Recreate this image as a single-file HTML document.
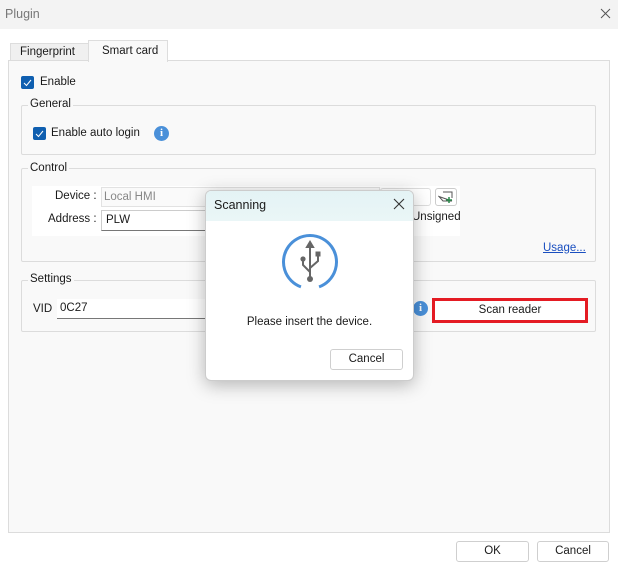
<!DOCTYPE html>
<html><head><meta charset="utf-8"><style>
*{box-sizing:border-box;margin:0;padding:0}
body{width:618px;height:572px;position:relative;background:#fff;font-family:"Liberation Sans",sans-serif;font-size:11.5px;color:#1a1a1a;overflow:hidden}
.a{position:absolute}
.title{left:0;top:0;width:618px;height:29px;background:#f3f3f3}
.gb{border:1px solid #dcdcdc;border-radius:2px}
.lbl{background:#f9f9f9;padding:0 2px}
.cb{width:13px;height:13px;background:#0f5fb0;border-radius:2px}
.cb svg{position:absolute;left:2px;top:2px}
.info{width:15px;height:15px;border-radius:50%;background:#4a90d9;color:#fff;font-weight:bold;font-size:11px;text-align:center;line-height:15px;font-family:"Liberation Serif",serif}
.btn{background:#fff;border:1px solid #cfcfcf;border-radius:3px;text-align:center;line-height:18px}
</style></head><body>
<div class="a title"></div>
<div class="a" style="left:5px;top:7px;color:#777;font-size:12.5px">Plugin</div>
<svg class="a" style="left:600px;top:8px" width="11" height="11"><path d="M1 1L10 10M10 1L1 10" stroke="#555" stroke-width="1"/></svg>

<div class="a" style="left:10px;top:43px;width:79px;height:18px;background:#f0f0f0;border:1px solid #ddd;border-bottom:none"></div>
<div class="a" style="left:20px;top:46px">Fingerprint</div>
<div class="a" style="left:8px;top:60px;width:602px;height:473px;background:#f9f9f9;border:1px solid #dcdcdc"></div>
<div class="a" style="left:88px;top:40px;width:80px;height:22px;background:#f9f9f9;border:1px solid #ddd;border-bottom:none"></div>
<div class="a" style="left:102px;top:45px">Smart card</div>

<div class="a cb" style="left:21px;top:76px"><svg width="9" height="9"><path d="M1 5L3.5 7.5L8 2" stroke="#fff" fill="none"/></svg></div>
<div class="a" style="left:40px;top:76px">Enable</div>

<div class="a gb" style="left:21px;top:105px;width:575px;height:50px"></div>
<div class="a lbl" style="left:28px;top:98px">General</div>
<div class="a cb" style="left:33px;top:127px"><svg width="9" height="9"><path d="M1 5L3.5 7.5L8 2" stroke="#fff" fill="none"/></svg></div>
<div class="a" style="left:51px;top:127px">Enable auto login</div>
<div class="a info" style="left:154px;top:126px">i</div>

<div class="a gb" style="left:21px;top:168px;width:575px;height:94px"></div>
<div class="a lbl" style="left:28px;top:162px">Control</div>
<div class="a" style="left:32px;top:186px;width:428px;height:50px;background:#fff"></div>
<div class="a" style="left:55px;top:190px">Device :</div>
<div class="a" style="left:101px;top:187px;width:279px;height:20px;border:1px solid #e2e2e2;background:#fafafa;color:#888;padding:3px 2px">Local HMI</div>
<div class="a" style="left:48px;top:213px">Address :</div>
<div class="a" style="left:101px;top:210px;width:279px;height:21px;border:1px solid #ccc;border-bottom:1px solid #777;padding:3px 4px">PLW</div>
<div class="a" style="left:380px;top:188px;width:51px;height:18px;border:1px solid #ddd;border-radius:3px;background:#fff"></div>
<div class="a" style="left:435px;top:188px;width:22px;height:18px;border:1px solid #ccc;border-radius:3px;background:#fff"></div>
<svg class="a" style="left:438px;top:190px" width="17" height="14"><path d="M5 2H14V8M14 11H5L1 6.5Z" stroke="#555" fill="none"/><path d="M11 7V13M8 10H14" stroke="#2a8a4a" stroke-width="1.5"/></svg>
<div class="a" style="left:412px;top:211px">Unsigned</div>
<div class="a" style="left:543px;top:242px;color:#1a4fc0;text-decoration:underline">Usage...</div>

<div class="a gb" style="left:21px;top:280px;width:575px;height:52px"></div>
<div class="a lbl" style="left:28px;top:273px">Settings</div>
<div class="a" style="left:33px;top:303px">VID</div>
<div class="a" style="left:57px;top:299px;width:160px;height:20px;background:#fff;border-bottom:1px solid #777;padding:3px 3px">0C27</div>
<div class="a info" style="left:413px;top:301px">i</div>
<div class="a" style="left:432px;top:298px;width:156px;height:25px;border:3px solid #e41b23;background:#fff;text-align:center;line-height:19px">Scan reader</div>

<div class="a btn" style="left:456px;top:541px;width:73px;height:21px">OK</div>
<div class="a btn" style="left:537px;top:541px;width:72px;height:21px">Cancel</div>

<div class="a" style="left:205px;top:190px;width:209px;height:191px;background:#fff;border:1px solid #ccc;border-radius:6px;box-shadow:0 4px 18px rgba(0,0,0,0.28);overflow:hidden">
<div style="height:30px;background:linear-gradient(#e4f3f5,#eaf6f7)"></div>
</div>
<div class="a" style="left:214px;top:198px;font-size:12.5px">Scanning</div>
<svg class="a" style="left:393px;top:198px" width="12" height="12"><path d="M1 1L11 11M11 1L1 11" stroke="#333" stroke-width="1.1"/></svg>
<svg class="a" style="left:280px;top:232px" width="60" height="60">
<path d="M39.06 54.9A26.5 26.5 0 1 0 20.94 54.9" fill="none" stroke="#4a90d9" stroke-width="3"/>
<g stroke="#666" stroke-width="2" fill="#666">
<path d="M30 13V47" fill="none"/><path d="M27 15L30 10L33 15Z"/>
<path d="M30 40L23 33V28" fill="none"/><circle cx="23" cy="27" r="2.6" stroke="none"/>
<path d="M30 36L38 29V23" fill="none"/><rect x="35.5" y="19.5" width="5" height="5" stroke="none"/>
<circle cx="30" cy="47" r="3" stroke="none"/></g></svg>
<div class="a" style="left:205px;top:316px;width:209px;text-align:center">Please insert the device.</div>
<div class="a btn" style="left:330px;top:349px;width:73px;height:21px">Cancel</div>
</body></html>
